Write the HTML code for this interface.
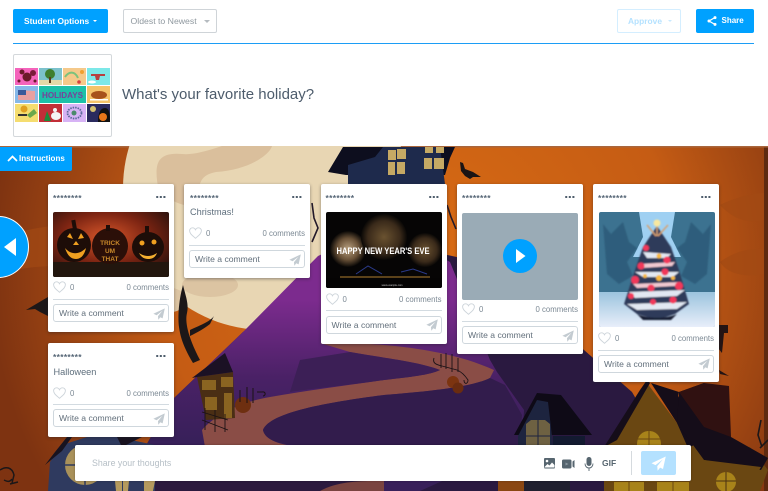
<!DOCTYPE html>
<html><head><meta charset="utf-8">
<style>
*{box-sizing:border-box}
html,body{margin:0;padding:0;width:768px;height:491px;overflow:hidden;background:#fff;font-family:"Liberation Sans",sans-serif}
.a{position:absolute}
.btn{position:absolute;top:9px;height:24px;border-radius:2px;font-size:8.4px;line-height:24px}
.card{position:absolute;width:126px;background:#fff;border-radius:2px;box-shadow:0 1px 3px rgba(30,30,40,.45);color:#5f6f7d}
.dots{position:absolute;left:5px;top:9px;font-size:8.5px;line-height:10px;font-weight:bold;letter-spacing:.3px;color:#566676}
.more{position:absolute;left:108px;top:12px;width:10px;height:2.4px;background:radial-gradient(circle at 1.2px 1.2px,#4d5c6b 1.2px,transparent 1.3px) 0 0/3.6px 2.4px repeat-x}
.t{position:absolute;left:5.5px;font-size:9.2px;line-height:12px;color:#5f6f7d;top:22px}
.media{position:absolute;left:5px;top:28px;width:116px;border-radius:2px;overflow:hidden;display:block}
.h{position:absolute;left:5px;width:13px;height:12px}
.n{position:absolute;left:22px;font-size:7.8px;line-height:10px;color:#7c8994}
.c{position:absolute;right:5px;font-size:7.8px;line-height:10px;color:#7c8994}
.d{position:absolute;left:5px;width:116px;height:1px;background:#d3dbe1}
.w{position:absolute;left:5px;width:116px;height:18px;border:1px solid #cfd7dd;border-radius:3px;font-size:8.6px;line-height:16px;padding-left:5px;color:#626f7b}
.s{position:absolute;left:99px;top:2.5px;width:12px;height:12px}
</style></head>
<body>
<svg width="0" height="0" style="position:absolute"><defs>
<symbol id="heart" viewBox="0 0 13 12"><path d="M6.5 11.3C3.5 8.6.6 6.6.6 3.8.6 2 2 .8 3.5.8c1.3 0 2.4.7 3 2 .6-1.3 1.7-2 3-2 1.500 0 2.900 1.200 2.900 3 0 2.800-2.900 4.800-5.900 7.500z" fill="none" stroke="#cdd4da" stroke-width=".9"/></symbol>
<symbol id="send" viewBox="0 0 12 12"><path d="M11.8.4L.4 5.8l3.200 1.500L9.500 2.700 5 8.100l.3 3.700 2-2.500 2.300 1.100z" fill="#c3cbd1"/></symbol>
</defs></svg>

<!-- scene -->
<svg class="a" style="left:0;top:146px" width="768" height="345" viewBox="0 146 768 345">
<defs>
<radialGradient id="bg" gradientUnits="userSpaceOnUse" cx="420" cy="270" r="430"><stop offset="0" stop-color="#d96c14"/><stop offset=".6" stop-color="#c55c14"/><stop offset="1" stop-color="#7e3311"/></radialGradient>
<linearGradient id="pur" gradientUnits="userSpaceOnUse" x1="0" y1="300" x2="0" y2="440"><stop offset="0" stop-color="#7c2b8e"/><stop offset=".55" stop-color="#4a2166"/><stop offset="1" stop-color="#38205a"/></linearGradient>
</defs>
<rect x="0" y="146" width="768" height="345" fill="url(#bg)"/>
<rect x="764" y="146" width="4" height="345" fill="#5e2a10"/>
<rect x="0" y="146" width="768" height="1.5" fill="#a9663c"/>
<path d="M0 240C30 225 70 222 130 226L130 262C70 268 30 262 0 275z" fill="#a34a14" opacity=".65"/>
<path d="M720 205c20-10 40-12 44-12v27c-20 5-35-5-44-15zM720 262c20-15 40-13 44-13v25c-15 3-35 2-44-12z" fill="#a34a14" opacity=".7"/>
<!-- moon -->
<circle cx="265" cy="188" r="142" fill="#e8d6b3"/>
<path d="M157 180c-2-18 2-28 25-26 10 1 22-2 40-8h50c-2 8-22 24-56 26-15 3-18 10-18 30 0 10-40 0-41-22z" fill="#dabf9c"/>
<ellipse cx="165" cy="300" rx="22" ry="13" fill="#dcc4a2"/><ellipse cx="210" cy="285" rx="28" ry="12" fill="#dcc4a2"/>
<!-- dark hill back -->
<path d="M120 491L172 400 243 332 380 240 470 260 584 350 632 392 660 440V491z" fill="#2a1940"/>
<path d="M172 400L243 332 318 256 385 225 450 262 490 360 497 372 524 410 522 445 420 491H120z" fill="url(#pur)"/>
<!-- road -->
<path d="M320 343C360 342 440 345 494 370L490 378C470 388 420 392 384 395 330 402 270 412 263 430 265 440 280 445 300 447L205 447 202 430C215 415 240 402 270 397 310 390 350 385 384 380 410 377 430 375 440 370 420 362 384 358 350 352z" fill="#8a4d46"/>
<path d="M263 430C270 412 330 402 384 395 420 392 470 388 490 378L505 385 522 415 520 445H300C280 445 265 440 263 430z" fill="#321c4c"/>
<path d="M350 352C384 358 420 362 440 370 430 375 410 377 384 380 350 385 300 390 290 392L300 360z" fill="#3c1f56"/>
<path d="M155 491V481H330C345 478 370 481 384 481V491z" fill="#2c1a3e"/><path d="M320 491C340 480 365 481 384 481V491z" fill="#7a4440"/>
<!-- top house -->
<path d="M328 172L343 147H455L450 158 445 175H346z" fill="#0d0e1e"/>
<path d="M348 184V165L375 157 383 147H440L445 184z" fill="#1e2a4c"/>
<g fill="#c5a964"><path d="M388 150h8v10h-8zM397 149h9v10h-9zM388 162h7v13h-7zM397 162h8v12h-8zM425 147h8v6h-8zM436 147h8v6h-8zM424 158h8v11h-8zM434 158h10v11h-10z"/></g>
<path d="M460 162l3 1 2 6 8 3 8 5-8 0-3 2-5-3-4-5z" fill="#1a1414"/>
<!-- trees -->
<path d="M183 285c3 12 6 20 4 28-2 8 0 22 13 47l-7 3c-12-20-13-30-14-36-1-8-1-24 4-42zM190 330c8-4 20-8 24-14l-4 8c-8 6-12 8-20 12zM174 342l12 6" fill="#1c1718"/>
<path d="M26 310L48 297V316L40 312 35 309z" fill="#1c1718"/>
<path d="M312 203l2 15 4 10-6 14M447 205l4 12 5 12" stroke="#241a2a" stroke-width="1.6" fill="none"/>
<path d="M715 325h13v8h-4l-2 20-4-5 1-15h-4zM719 370l10 6-9-2z" fill="#231414"/>
<!-- small house -->
<path d="M197 377l36-5 2 46-29 2z" fill="#4a2e14"/>
<path d="M192 378l33-25 8 19-36 5z" fill="#1b1124"/>
<path d="M202 380h14v10h-14zM205 397h12v13h-12zM224 393h8v25h-8zM221 377h12v10h-12z" fill="#8a6421"/>
<path d="M202 412l26 8M202 420l26 10M205 408v22M215 410v22M225 414v18" stroke="#1b1214" stroke-width=".9" fill="none"/>
<circle cx="243" cy="405" r="8" fill="#6e2f10"/>
<path d="M240 390v12M247 387v16M253 388v15M257 392h5c4-1 4 4 1 4" stroke="#1b1214" fill="none"/>
<!-- pumpkins/fence right -->
<circle cx="453" cy="382" r="6" fill="#7c3410"/><circle cx="458" cy="388" r="5.5" fill="#6a2c10"/>
<path d="M441 354v14M446 353v16M452 354v18M458 358v14M434 358c-2 6 4 7 8 8l15 4c5 2 9 7 11 10 0 4-4 5-4 0" fill="none" stroke="#1a1216" stroke-width=".9"/>
<!-- bottom left house -->
<path d="M48 491L50 462 62 445 87 437H117L155 445V491z" fill="#2f3a5f"/>
<path d="M45 465l10-13 12-15 5 0-10 14zM117 437h25l-20 10z" fill="#181320"/>
<circle cx="85" cy="465" r="20" fill="#a9915a"/>
<path d="M62 465h46M85 445v40" stroke="#2f3a5f" stroke-width="1.5"/>
<path d="M115 481h7v10h-6zM123 481h6l-1 10h-5zM144 481h11l-2 10h-9z" fill="#b59a5e"/>
<path d="M0 470c6-4 12-3 14 5l-2 8M4 480c4 2 6 2 8-1M10 484l8-2" stroke="#1c1718" stroke-width="1.5" fill="none"/>
<!-- mid house -->
<path d="M514 435L537 393 561 395 592 435z" fill="#0e0a16"/>
<path d="M518 445V436L537 400 548 402 553 445z" fill="#1d243f"/>
<path d="M553 436H585V445H553z" fill="#131a30"/>
<path d="M526 445V424L531 420H545L550 424V445z" fill="#6e6142"/>
<path d="M538 420v25M526 436h24" stroke="#1d243f"/>
<path d="M524 481h46v10h-46z" fill="#20202f"/><path d="M498 481h26v10h-26z" fill="#8a4712"/>
<!-- right house -->
<path d="M647 383L604 447V491H760L768 470 750 447 700 445 677 423z" fill="#6a4712"/>
<path d="M647 380L650 383 617 440 604 447 640 390z" fill="#150d19"/>
<path d="M651 383L679 392 678 396 704 440 688 448 677 423z" fill="#150d19"/>
<path d="M679 392L704 383 731 437 768 458 761 470 704 460 677 423z" fill="#150d19"/>
<path d="M679 392L704 383 729 386 731 437 704 427z" fill="#301111"/>
<path d="M704 460L761 467 747 491H690z" fill="#6a4712"/>
<path d="M637 445c0-10 6-14 12-14s12 4 12 14z" fill="#a8831a"/><path d="M649 431v14M637 439h24" stroke="#6a4712"/>
<path d="M614 482h30v9h-30zM657 482h32v9h-32z" fill="#a8831a"/><path d="M629 482v9M673 482v9" stroke="#6a4712"/>
<circle cx="726" cy="482" r="10" fill="#a8831a"/><path d="M716 481h20M726 472v19" stroke="#4a3112"/>
<path d="M761 420l-3 15 4 12M768 440l-8 8" stroke="#1c1718" stroke-width="1.6" fill="none"/>
</svg>

<!-- header -->
<div class="btn" style="left:13px;width:95px;background:#00a1ff;color:#fff;font-weight:bold;padding-left:11px">Student Options<span class="a" style="left:80px;top:11px;border:2px solid transparent;border-top:2.5px solid #fff;border-bottom:0"></span></div>
<div class="btn" style="left:123px;width:94px;background:#fff;border:1px solid #cfd4d8;color:#8f989f;padding-left:6.5px;line-height:22px;font-size:8.7px">Oldest to Newest<span class="a" style="left:80px;top:10px;border:3px solid transparent;border-top:3px solid #b5bbc0;border-bottom:0"></span></div>
<div class="btn" style="left:617px;width:64px;background:#fff;border:1px solid #d4eeff;color:#b5e2ff;padding-left:10px;line-height:22px;font-weight:bold">Approve<span class="a" style="left:50px;top:10px;border:2px solid transparent;border-top:2px solid #c9eaff;border-bottom:0"></span></div>
<div class="btn" style="left:696px;width:58px;background:#00a1ff;color:#fff;font-weight:bold;padding-left:25.5px;font-size:8px">Share
<svg class="a" style="left:11px;top:7px" width="10" height="10" viewBox="0 0 10 10"><path d="M8 1.500L2 5l6 3.500" fill="none" stroke="#fff" stroke-width="1.300"/><circle cx="8" cy="1.600" r="1.500" fill="#fff"/><circle cx="2" cy="5" r="1.500" fill="#fff"/><circle cx="8" cy="8.400" r="1.500" fill="#fff"/></svg></div>
<div class="a" style="left:13px;top:43px;width:741px;height:1px;background:#1c9df5"></div>

<!-- thumbnail -->
<div class="a" style="left:13px;top:54px;width:99px;height:83px;border:1px solid #d4d8db;border-radius:2px;background:#fff"></div>
<svg class="a" style="left:14px;top:68px" width="97" height="55" viewBox="0 0 97 55">
<rect x="1" y="0" width="23" height="17" fill="#f463bb"/><circle cx="8" cy="4" r="2.5" fill="#6b1a2a"/><circle cx="13" cy="9" r="4.5" fill="#6b1a2a"/><circle cx="19" cy="5" r="3" fill="#7a1a3a"/><circle cx="5" cy="13" r="1.5" fill="#6b1a2a"/><circle cx="21" cy="13" r="1.5" fill="#6b1a2a"/>
<rect x="25" y="0" width="23" height="17" fill="#7cc2cc"/><rect x="25" y="12" width="23" height="5" fill="#e4d9a8"/><circle cx="36" cy="6" r="5" fill="#3f7f2f"/><rect x="35" y="9" width="2" height="6" fill="#5a3a1a"/>
<rect x="49" y="0" width="23" height="17" fill="#f5c98a"/><path d="M51 9c4-6 10-6 13 1" stroke="#7cc27c" stroke-width="2" fill="none"/><circle cx="68" cy="4" r="2" fill="#f0a030"/><circle cx="65" cy="14" r="1.8" fill="#d64040"/>
<rect x="73" y="0" width="23" height="17" fill="#7ce8e8"/><path d="M77 6h14v2H86l-1 4h-3l-1-4h-4z" fill="#b84040"/><ellipse cx="78" cy="14" rx="4" ry="1.5" fill="#fff"/>
<rect x="1" y="18" width="23" height="17" fill="#86b8e8"/><path d="M4 22l17 1v9l-17 0z" fill="#e8a0a0"/><rect x="4" y="22" width="8" height="5" fill="#3a5a9a"/>
<rect x="25" y="18" width="47" height="17" fill="#1cc0a8"/><text x="48.5" y="30" text-anchor="middle" font-size="8.5" font-weight="bold" fill="#7a3f9a" textLength="41" lengthAdjust="spacingAndGlyphs">HOLIDAYS</text>
<rect x="73" y="18" width="23" height="17" fill="#f5c46a"/><ellipse cx="85" cy="27" rx="8" ry="4" fill="#a8521a"/><rect x="76" y="31" width="18" height="1.5" fill="#fff"/>
<rect x="1" y="36" width="23" height="18" fill="#f5dd70"/><circle cx="10" cy="41" r="3.5" fill="#e0a020"/><rect x="4" y="46" width="9" height="2" fill="#333"/><path d="M13 47l7-6 3 4-7 5z" fill="#6ca84c"/>
<rect x="25" y="36" width="23" height="18" fill="#c22e38"/><path d="M30 53l3-10 4 10z" fill="#1f8a3a"/><ellipse cx="42" cy="48" rx="5" ry="4" fill="#f4f4f4"/><circle cx="41" cy="42" r="2" fill="#f4f4f4"/>
<rect x="49" y="36" width="23" height="18" fill="#d7b3f5"/><ellipse cx="60.5" cy="45" rx="7" ry="5.5" fill="none" stroke="#5a6a9a" stroke-width="1.8" stroke-dasharray="1.500 1"/><circle cx="60" cy="45" r="2.5" fill="#4a8a6a"/>
<rect x="73" y="36" width="23" height="18" fill="#2a2a5e"/><circle cx="79" cy="41" r="3" fill="#d4c070"/><path d="M84 54c0-8 2-14 7-14s5 8 5 14z" fill="#111"/><circle cx="89" cy="49" r="4" fill="#e8761a"/>
</svg>
<div class="a" style="left:122px;top:85px;font-size:15px;line-height:20px;color:#4d5c6c">What's your favorite holiday?</div>

<!-- instructions -->
<div class="a" style="left:0;top:147px;width:72px;height:24px;background:#00a1ff;border-radius:0 0 2px 0;color:#fff;font-size:8px;line-height:24px;padding-left:19px;font-weight:bold">Instructions
<svg class="a" style="left:7px;top:8px" width="11" height="7" viewBox="0 0 11 7"><path d="M1 6l4.500-4.500L10 6" fill="none" stroke="#fff" stroke-width="1.700"/></svg></div>

<!-- left arrow -->
<div class="a" style="left:-33px;top:215.5px;width:62px;height:62px;border-radius:50%;background:#00a1ff;border:1px solid #fff"></div>
<svg class="a" style="left:3px;top:237px" width="14" height="20"><path d="M1 10L13 1v18z" fill="#fff"/></svg>

<!-- card 1 -->
<div class="card" style="left:48px;top:184px;height:148px">
<div class="dots">********</div><div class="more"></div>
<svg class="media" height="65" viewBox="0 0 116 65">
<defs><radialGradient id="p1" cx=".45" cy=".4" r=".7"><stop offset="0" stop-color="#d9572a"/><stop offset=".55" stop-color="#7c2412"/><stop offset="1" stop-color="#26100c"/></radialGradient></defs>
<rect width="116" height="65" fill="url(#p1)"/><rect y="50" width="116" height="15" fill="#22160e"/>
<ellipse cx="21" cy="33" rx="17" ry="17" fill="#1d0d08"/><rect x="19" y="8" width="4" height="10" fill="#1d0d08" transform="rotate(-10 21 12)"/>
<ellipse cx="57" cy="34" rx="18" ry="18" fill="#2b0f08"/><rect x="53" y="13" width="4" height="6" fill="#1d0d08"/>
<ellipse cx="95" cy="35" rx="16" ry="15" fill="#1d0d08"/><rect x="92" y="14" width="4" height="10" fill="#1d0d08"/>
<path d="M14 25l3-4 3 6zM25 27l3-6 3 5zM20 33l3-4 3 4zM12 36c6 7 14 7 21 0-1 5-4 11-10 11s-9-5-11-11z" fill="#f0a020"/>
<circle cx="89" cy="31" r="2.5" fill="#f0a020"/><circle cx="101" cy="30" r="2.5" fill="#f0a020"/><path d="M86 41c6 4 12 4 18 0-2 5-5 6-9 6s-7-2-9-6z" fill="#f5b030"/>
<text x="57" y="33" font-size="6.500" font-weight="bold" fill="#c8882a" text-anchor="middle">TRICK</text><text x="57" y="41" font-size="6.500" font-weight="bold" fill="#c8882a" text-anchor="middle">UM</text><text x="57" y="49" font-size="6.500" font-weight="bold" fill="#c8882a" text-anchor="middle">THAT</text>
</svg>
<svg class="h" style="top:97px"><use href="#heart"/></svg><div class="n" style="top:99px">0</div><div class="c" style="top:99px">0 comments</div>
<div class="d" style="top:115px"></div>
<div class="w" style="top:120px">Write a comment<svg class="s"><use href="#send"/></svg></div>
</div>

<!-- card 2 -->
<div class="card" style="left:184px;top:184px;height:94px">
<div class="dots" style="left:6px">********</div><div class="more"></div>
<div class="t" style="left:6px">Christmas!</div>
<svg class="h" style="top:43px"><use href="#heart"/></svg><div class="n" style="top:45px">0</div><div class="c" style="top:45px">0 comments</div>
<div class="d" style="top:61px"></div>
<div class="w" style="top:66px">Write a comment<svg class="s"><use href="#send"/></svg></div>
</div>

<!-- card 3 -->
<div class="card" style="left:320.5px;top:184px;height:160px">
<div class="dots">********</div><div class="more"></div>
<svg class="media" height="76" viewBox="0 0 116 76">
<defs><radialGradient id="f1"><stop offset="0" stop-color="#b8a080"/><stop offset=".6" stop-color="#6a5238"/><stop offset="1" stop-color="#0a0806"/></radialGradient><radialGradient id="f2"><stop offset="0" stop-color="#6a5230"/><stop offset=".7" stop-color="#3a2a1a"/><stop offset="1" stop-color="#0a0806"/></radialGradient></defs>
<rect width="116" height="76" fill="#060505"/>
<circle cx="22" cy="37" r="18" fill="url(#f1)"/><circle cx="58" cy="25" r="23" fill="url(#f2)"/><circle cx="99" cy="38" r="17" fill="url(#f2)"/>
<path d="M14 65h90" stroke="#b08030" stroke-width="1"/><path d="M30 62l12-8 14 8M75 60l12-3 14 5" stroke="#2a3a8a" stroke-width="1" fill="none"/>
<rect x="0" y="66" width="116" height="10" fill="#050404"/>
<text x="57" y="42" text-anchor="middle" font-size="9.500" font-weight="bold" fill="#fff" textLength="93" lengthAdjust="spacingAndGlyphs">HAPPY NEW YEAR'S EVE</text>
<text x="66" y="74" text-anchor="middle" font-size="2.500" fill="#ccc">www.example.com</text>
</svg>
<svg class="h" style="top:108.5px"><use href="#heart"/></svg><div class="n" style="top:110.5px">0</div><div class="c" style="top:110.5px">0 comments</div>
<div class="d" style="top:126px"></div>
<div class="w" style="top:131.5px">Write a comment<svg class="s"><use href="#send"/></svg></div>
</div>

<!-- card 4 -->
<div class="card" style="left:457px;top:184px;height:170px">
<div class="dots">********</div><div class="more"></div>
<div class="a" style="left:5px;top:28.5px;width:116px;height:87px;background:#9aabb6;border-radius:2px"></div>
<div class="a" style="left:46px;top:55px;width:34px;height:34px;border-radius:50%;background:#00a1ff"></div>
<svg class="a" style="left:58px;top:64px" width="12" height="16"><path d="M1 1l9.500 7L1 15z" fill="#fff"/></svg>
<svg class="h" style="top:118.5px"><use href="#heart"/></svg><div class="n" style="top:121px">0</div><div class="c" style="top:121px">0 comments</div>
<div class="d" style="top:136.5px"></div>
<div class="w" style="top:142px">Write a comment<svg class="s"><use href="#send"/></svg></div>
</div>

<!-- card 5 -->
<div class="card" style="left:593px;top:184px;height:198px">
<div class="dots">********</div><div class="more"></div>
<svg class="media" style="left:5.5px" height="115" viewBox="0 0 116 115">
<defs>
<linearGradient id="sn" x1="0" y1="0" x2="0" y2="1"><stop offset="0" stop-color="#9cc4de"/><stop offset="1" stop-color="#e8eefa"/></linearGradient>
<filter id="bl"><feGaussianBlur stdDeviation=".8"/></filter>
</defs>
<rect width="116" height="115" fill="#3c7290"/>
<path d="M40 0H76L72 25 82 45H34L44 25z" fill="#9fd0f2"/>
<rect y="80" width="116" height="35" fill="url(#sn)"/>
<g filter="url(#bl)">
<path d="M4 12l8 10 12-12 6 20 8 6-10 14 6 14-14 8-12-10zM112 12l-8 10-12-12-6 20-8 6 10 14-6 14 14 8 12-10z" fill="#2d5d7c"/>
<path d="M58 14L72 35 80 58 90 92 76 102 58 108 38 102 25 92 36 58 44 35z" fill="#2f3a5a"/>
<path d="M44 40l28 2-4 4-20 0zM36 60l44 0-6 5-30 0zM30 80l56-2-8 6-42 2zM28 92l60-2-10 7-40 1z" fill="#e2e8f2"/>
<path d="M40 52l36-2-3 4-30 2zM34 72l48-2-6 4-38 2z" fill="#f0c8d0"/>
<g fill="#f2375a"><circle cx="47" cy="36" r="3"/><circle cx="68" cy="48" r="3.500"/><circle cx="36" cy="68" r="4"/><circle cx="80" cy="74" r="4"/><circle cx="52" cy="76" r="3.500"/><circle cx="66" cy="60" r="3.500"/><circle cx="42" cy="54" r="3.500"/><circle cx="32" cy="84" r="3"/><circle cx="74" cy="88" r="3.500"/><circle cx="54" cy="90" r="3"/></g>
<g fill="#f6b840"><circle cx="60" cy="44" r="2.500"/><circle cx="60" cy="66" r="3"/><circle cx="46" cy="64" r="2"/><circle cx="74" cy="66" r="2"/></g>
<path d="M38 102c10 5 30 5 40 0l-6 6H44z" fill="#141c30"/>
<path d="M57 24l-9-11M59 24l10-11M58 24V14" stroke="#d8a070" stroke-width="1.500"/>
<circle cx="58" cy="11" r="3.500" fill="#f8e8a0"/>
</g>
</svg>
<svg class="h" style="top:148px"><use href="#heart"/></svg><div class="n" style="top:150px">0</div><div class="c" style="top:150px">0 comments</div>
<div class="d" style="top:165.5px"></div>
<div class="w" style="top:170.5px">Write a comment<svg class="s"><use href="#send"/></svg></div>
</div>

<!-- card 6 -->
<div class="card" style="left:48px;top:343px;height:94px">
<div class="dots">********</div><div class="more"></div>
<div class="t" style="left:5.5px;top:23px">Halloween</div>
<svg class="h" style="top:44px"><use href="#heart"/></svg><div class="n" style="top:46px">0</div><div class="c" style="top:46px">0 comments</div>
<div class="d" style="top:61px"></div>
<div class="w" style="top:66px">Write a comment<svg class="s"><use href="#send"/></svg></div>
</div>

<!-- bottom bar -->
<div class="a" style="left:75px;top:445px;width:616px;height:36px;background:#fff;border-radius:2px;box-shadow:0 0 2px rgba(0,0,0,.3)"></div>
<div class="a" style="left:92px;top:457px;font-size:8.8px;line-height:12px;color:#b6bfc6">Share your thoughts</div>
<svg class="a" style="left:544px;top:458px" width="11" height="11" viewBox="0 0 11 11"><rect width="11" height="10.5" rx="1" fill="#56656f"/><circle cx="3" cy="3" r="1.300" fill="#fff"/><path d="M.5 9l3-3 2 1.500L8 4.500 10.500 7v2.500H.5z" fill="#fff"/></svg>
<svg class="a" style="left:562px;top:458.5px" width="13" height="10" viewBox="0 0 13 10"><rect y=".5" width="9.5" height="9" rx="1.500" fill="#56656f"/><path d="M3.500 3.500l3 1.500-3 1.500z" fill="#8a97a0"/><path d="M10.500 2.500l2-1.500v8l-2-1.500z" fill="#56656f"/></svg>
<svg class="a" style="left:584px;top:456.5px" width="10" height="14" viewBox="0 0 10 14"><rect x="2.500" y="0" width="5" height="9" rx="2.500" fill="#56656f"/><path d="M1 6.500c0 3 2 4.500 4 4.500s4-1.500 4-4.500M5 11v3" fill="none" stroke="#56656f" stroke-width=".9"/></svg>
<div class="a" style="left:602px;top:458px;font-size:8.5px;line-height:10px;font-weight:bold;color:#56656f">GIF</div>
<div class="a" style="left:631px;top:451px;width:1px;height:24px;background:#d5dade"></div>
<div class="a" style="left:641px;top:451px;width:35px;height:24px;background:#b4e1ff;border-radius:2px"></div>
<svg class="a" style="left:651px;top:456px" width="15" height="15" viewBox="0 0 12 12"><path d="M11.800.4L.4 5.800l3.200 1.500L9.500 2.700 5 8.100l.3 3.700 2-2.500 2.300 1.100z" fill="#fff"/></svg>
</body></html>
